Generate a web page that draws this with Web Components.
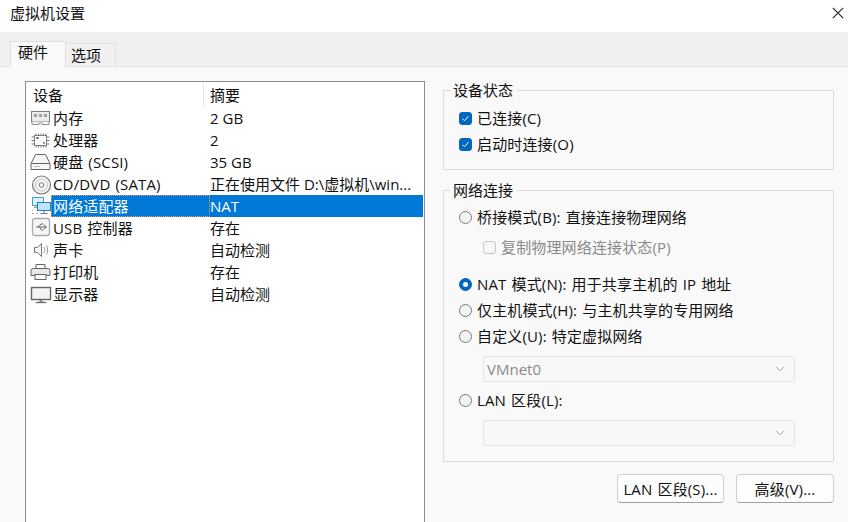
<!DOCTYPE html>
<html lang="zh"><head><meta charset="utf-8"><title>虚拟机设置</title>
<style>
html,body{margin:0;padding:0;background:#f9f9f9;overflow:hidden}
body{font:15px/20px "Open Sans","Noto Sans CJK SC",sans-serif;color:#111}
</style></head><body>
<vm-dialog>
  <device-list slot="left">
    <device-row icon="mem" name="内存" sum="2 GB"></device-row>
    <device-row icon="cpu" name="处理器" sum="2"></device-row>
    <device-row icon="hdd" name="硬盘 (SCSI)" sum="35 GB"></device-row>
    <device-row icon="cd" name="CD/DVD (SATA)" sum="正在使用文件 D:\虚拟机\win..."></device-row>
    <device-row icon="net" name="网络适配器" sum="NAT" selected></device-row>
    <device-row icon="usb" name="USB 控制器" sum="存在"></device-row>
    <device-row icon="snd" name="声卡" sum="自动检测"></device-row>
    <device-row icon="prn" name="打印机" sum="存在"></device-row>
    <device-row icon="mon" name="显示器" sum="自动检测"></device-row>
  </device-list>
  <group-box slot="right" label="设备状态" style="height:80px;margin-top:9px">
    <opt-item type="check" checked style="margin-top:8px">已连接(C)</opt-item>
    <opt-item type="check" checked style="margin-top:6px">启动时连接(O)</opt-item>
  </group-box>
  <group-box slot="right" label="网络连接" style="height:272px;margin-top:20px">
    <opt-item type="radio" style="margin-top:7px">桥接模式(B): 直接连接物理网络</opt-item>
    <opt-item type="check" disabled style="margin:10px 0 0 24px">复制物理网络连接状态(P)</opt-item>
    <opt-item type="radio" checked style="margin-top:17px">NAT 模式(N): 用于共享主机的 IP 地址</opt-item>
    <opt-item type="radio" style="margin-top:6px">仅主机模式(H): 与主机共享的专用网络</opt-item>
    <opt-item type="radio" style="margin-top:6px">自定义(U): 特定虚拟网络</opt-item>
    <combo-box style="margin-top:10px">VMnet0</combo-box>
    <opt-item type="radio" style="margin-top:8px">LAN 区段(L):</opt-item>
    <combo-box style="margin-top:10px"></combo-box>
  </group-box>
  <push-button slot="buttons" style="width:107px">LAN 区段(S)...</push-button>
  <push-button slot="buttons" style="width:98px">高级(V)...</push-button>
</vm-dialog>
<script>
const ICONS={
mem:'<rect x="1.500" y="4.500" width="18" height="10" fill="#ececec" stroke="#808080"/><path d="M4 7h3v3H4zM9 7h3v3H9zM14 7h3v3h-3z" fill="#a0a0a0"/><path d="M2 14.500v3h7v-1.500h3v1.500h7v-3" fill="#f6f6f6" stroke="#909090"/>',
cpu:'<rect x="4.500" y="6.500" width="12" height="10" fill="#fbfbfb" stroke="#808080"/><path d="M6 4.500v2M8.500 4.500v2M11 4.500v2M13.500 4.500v2M16 4.500v2M6 16.500v2M8.500 16.500v2M11 16.500v2M13.500 16.500v2M16 16.500v2M1.500 8h3M1.500 11.500h3M1.500 15h3M16.500 8h3M16.500 11.500h3M16.500 15h3" stroke="#777"/><rect x="6.500" y="8" width="2" height="2" fill="#555"/><rect x="13" y="13" width="2" height="2" fill="#999"/>',
hdd:'<path d="M5.500 3.500h10l4.500 9v6H1v-6z" fill="#f7f7f7" stroke="#666"/><path d="M1.500 12.500h18" stroke="#666"/><path d="M4 15.500h6" stroke="#bbb"/>',
cd:'<circle cx="11.500" cy="12" r="9" fill="#f4f4f4" stroke="#777" stroke-width="1.200"/><circle cx="11.500" cy="12" r="6" fill="none" stroke="#c4c4c4"/><circle cx="11.500" cy="12" r="2.300" fill="#fff" stroke="#777"/>',
net:'<rect x="2.500" y="2.500" width="11" height="8" fill="#d9eefb" stroke="#4a9bd0"/><path d="M4 12.500h5M6 11v1.500" stroke="#999"/><rect x="7.500" y="7.500" width="13" height="8" fill="#bfe3f8" stroke="#1f7fbf"/><path d="M10.500 18.500h7M14 16v2" stroke="#777"/><path d="M2 15.500h1M2 18.500h2M6 18.500h2" stroke="#aaa"/>',
usb:'<rect x="2.500" y="1.500" width="17" height="17" rx="2.500" fill="#f6f6f6" stroke="#aaa" stroke-width="1.300"/><path d="M6 10h10M14 8l2.500 2-2.500 2M8.500 10l2.500-3h2.500M9.500 10l2 3h2" fill="none" stroke="#666"/>',
snd:'<path d="M4.500 8.500h3l4-4v13l-4-4h-3z" fill="#f6f6f6" stroke="#777"/><path d="M14 8c1 1.800 1 4.200 0 6M16.500 6.500c1.600 2.800 1.600 6.200 0 9" fill="none" stroke="#999"/>',
prn:'<g transform="translate(-.5)"><path d="M6.500 8V3.500h9V8" fill="#fff" stroke="#666"/><path d="M3.500 7.500h15a2 2 0 0 1 2 2v5h-4v-1h-11v1h-4v-5a2 2 0 0 1 2-2z" fill="#e8e8e8" stroke="#666"/><rect x="5.500" y="13.500" width="11" height="5" fill="#fff" stroke="#666"/></g>',
mon:'<rect x="1.500" y="4.500" width="19" height="12" fill="#f4f4f4" stroke="#666" stroke-width="1.400"/><path d="M6 19.500h10" stroke="#666" stroke-width="1.300"/><path d="M11 17v2" stroke="#888" stroke-width="3"/>'
};
function def(name,css,html,extra){
  const t=document.createElement('template');
  t.innerHTML='<style>'+css+'</style>'+html;
  customElements.define(name,class extends HTMLElement{
    connectedCallback(){
      if(this.shadowRoot)return;
      const r=this.attachShadow({mode:'open'});
      r.appendChild(t.content.cloneNode(true));
      if(extra)extra.call(this,r);
    }
  });
}
def('vm-dialog',`
:host{display:flex;flex-direction:column;width:848px;height:522px;overflow:hidden;background:#f9f9f9}
.title{box-sizing:border-box;height:32px;background:#fff;display:flex;align-items:center;justify-content:space-between;padding:0 4px 6px 10px;font-size:15px;flex:none}
.title svg{display:block}
.tabs{height:35px;background:#f0f0f0;display:flex;align-items:flex-end;padding-left:10px;flex:none;box-shadow:inset 0 -1px #e4e4e4}
.tab{box-sizing:border-box;display:flex;align-items:center}
.on{width:56px;height:26px;background:#f9f9f9;border:1px solid #e0e0e0;border-bottom:0;padding:0 0 6px 7px}
.off{width:50px;height:23px;margin-bottom:1px;background:#f0f0f0;border:1px solid #e2e2e2;border-width:1px 1px 0 0;padding:0 0 1px 5px}
.body{flex:1;display:flex;padding:14px 14px 0 25px;min-height:0}
.left{width:400px;display:block;flex:none}
.right{flex:1;margin-left:18px;display:flex;flex-direction:column}
.btns{display:flex;justify-content:flex-end;gap:12px;margin-top:12px}
`,`<div class="title"><span>虚拟机设置</span><svg width="12" height="12" viewBox="0 0 12 12"><path d="M.8.8l10.400 10.400M11.200.8L.8 11.200" stroke="#222" stroke-width="1.100"/></svg></div>
<div class="tabs"><div class="tab on">硬件</div><div class="tab off">选项</div></div>
<div class="body"><div class="left"><slot name="left"></slot></div>
<div class="right"><slot name="right"></slot><div class="btns"><slot name="buttons"></slot></div></div></div>`);
def('device-list',`
:host{display:block;box-sizing:border-box;height:460px;background:#fff;border:1px solid #8c8c92;border-bottom:0;padding:0 1px}
.h{display:grid;grid-template-columns:176px 1fr;height:25px;align-items:center}
.h span{height:24px;line-height:24px}
.h span:first-child{padding-left:6px}
.h span:last-child{border-left:1px solid #e5e5e5;padding-left:6px}
`,`<div class="h"><span>设备</span><span>摘要</span></div><slot></slot>`);
def('device-row',`
:host{display:grid;grid-template-columns:23px 1fr 213px;height:22px;align-items:center;padding-left:1px;white-space:nowrap}
svg{display:block;width:22px;height:22px;margin-left:2px}
.n{height:22px;line-height:22px;padding-left:2px;letter-spacing:.15px;word-spacing:1px}
.s{height:22px;line-height:22px;overflow:hidden}
:host([selected]) .n,:host([selected]) .s{background:#0078d7;color:#fff}
:host([selected]) .n{outline:1px dotted #e0a060;outline-offset:-1px}
`,`<svg viewBox="0 0 22 22"></svg><span class="n"></span><span class="s"></span>`,function(r){
  r.querySelector('svg').innerHTML=ICONS[this.getAttribute('icon')];
  r.querySelector('.n').textContent=this.getAttribute('name');
  r.querySelector('.s').textContent=this.getAttribute('sum');
});
def('group-box',`
:host{display:block;box-sizing:border-box;border:1px solid #dcdcdc;border-radius:1px;padding:0 15px}
.l{display:block;width:max-content;background:#f9f9f9;margin:-10px 0 0 -9px;height:19px;padding:0 4px 0 3px;line-height:19px}
`,`<span class="l"></span><slot></slot>`,function(r){r.querySelector('.l').textContent=this.getAttribute('label')});
def('opt-item',`
:host{display:flex;align-items:center;height:20px;gap:5px;white-space:nowrap;letter-spacing:.15px;word-spacing:1px}
.b{box-sizing:border-box;width:13px;height:13px;flex:none;border:1px solid #7b7b7b;background:#f3f3f3;display:flex;align-items:center;justify-content:center}
:host([type=check]) .b{border-radius:3px}
:host([type=radio]) .b{border-radius:50%}
:host([checked]) .b{background:#0067c0;border-color:#0067c0}
:host([type=radio][checked]) .b::after{content:"";width:5px;height:5px;border-radius:50%;background:#fff}
:host([disabled]){color:#8a8a8a}
:host([disabled]) .b{border-color:#c6c6c6;background:#f7f7f7}
svg{display:none}
:host([type=check][checked]) svg{display:block}
`,`<span class="b"><svg width="9" height="9" viewBox="0 0 9 9"><path d="M1.500 4.700l2 2 4-4.500" fill="none" stroke="#fff" stroke-width="1"/></svg></span><span><slot></slot></span>`);
def('combo-box',`
:host{display:flex;box-sizing:border-box;height:26px;width:312px;margin-left:24px;border:1px solid #e4e4e4;border-radius:2px;background:#f8f8f8;color:#8a8a8a;align-items:center;justify-content:space-between;padding:0 9px 0 3px}
svg{display:block}
`,`<span><slot></slot></span><svg width="10" height="6" viewBox="0 0 10 6"><path d="M1 .8l4 4 4-4" fill="none" stroke="#a8a8a8"/></svg>`);
def('push-button',`
:host{display:flex;box-sizing:border-box;height:29px;align-items:center;justify-content:center;background:#fdfdfd;border:1px solid #d0d0d0;border-bottom-color:#a0a0a0;border-radius:4px;white-space:nowrap;letter-spacing:.15px;word-spacing:1px}
`,`<slot></slot>`);
</script>
</body></html>
